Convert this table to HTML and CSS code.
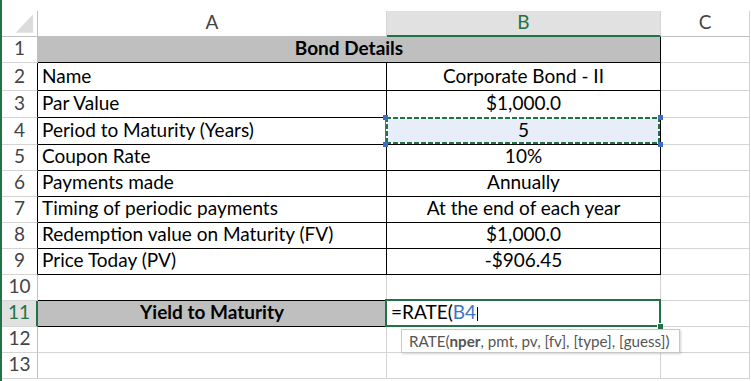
FILE: index.html
```html
<!DOCTYPE html>
<html lang="en">
<head>
<meta charset="utf-8">
<title>Bond Details – Yield to Maturity</title>
<link rel="stylesheet" href="styles.css">
</head>
<body>
<div class="sheet">
  <div class="grid">
    <div class="corner"><svg width="36" height="25" viewBox="0 0 36 25"><polygon points="14,22 32,22 32,3" fill="#dcdcdc"/></svg></div>
    <div class="colhdr">A</div>
    <div class="colhdr sel">B</div>
    <div class="colhdr">C</div>

    <div class="rowhdr">1</div>
    <div class="cell span2 shade bold center b">Bond Details</div>
    <div class="cell"></div>

    <div class="rowhdr edge">2</div>
    <div class="cell b">Name</div>
    <div class="cell b center">Corporate Bond - II</div>
    <div class="cell"></div>

    <div class="rowhdr edge">3</div>
    <div class="cell b">Par Value</div>
    <div class="cell b center">$1,000.0</div>
    <div class="cell"></div>

    <div class="rowhdr edge">4</div>
    <div class="cell b">Period to Maturity (Years)</div>
    <div class="cell b center ref">5<span class="h tl"></span><span class="h tr"></span><span class="h bl"></span><span class="h br"></span></div>
    <div class="cell"></div>

    <div class="rowhdr edge">5</div>
    <div class="cell b">Coupon Rate</div>
    <div class="cell b center">10%</div>
    <div class="cell"></div>

    <div class="rowhdr edge">6</div>
    <div class="cell b">Payments made</div>
    <div class="cell b center">Annually</div>
    <div class="cell"></div>

    <div class="rowhdr edge">7</div>
    <div class="cell b">Timing of periodic payments</div>
    <div class="cell b center">At the end of each year</div>
    <div class="cell"></div>

    <div class="rowhdr edge">8</div>
    <div class="cell b">Redemption value on Maturity (FV)</div>
    <div class="cell b center">$1,000.0</div>
    <div class="cell"></div>

    <div class="rowhdr edge">9</div>
    <div class="cell b">Price Today (PV)</div>
    <div class="cell b center">-$906.45</div>
    <div class="cell"></div>

    <div class="rowhdr">10</div>
    <div class="cell bb"></div>
    <div class="cell"></div>
    <div class="cell"></div>

    <div class="rowhdr active">11</div>
    <div class="cell shade bold center bb">Yield to Maturity</div>
    <div class="cell editing">=RATE(<span class="refText">B4</span><span class="caret"></span>
      <div class="tip">RATE(<b>nper</b>, pmt, pv, [fv], [type], [guess])</div>
    </div>
    <div class="cell"></div>

    <div class="rowhdr">12</div>
    <div class="cell"></div>
    <div class="cell"></div>
    <div class="cell"></div>

    <div class="rowhdr">13</div>
    <div class="cell"></div>
    <div class="cell"></div>
    <div class="cell"></div>
  </div>
</div>
</body>
</html>
```
FILE: styles.css
```css
html, body {
  margin: 0;
  padding: 0;
  background: #fff;
}
body {
  width: 751px;
  height: 381px;
  overflow: hidden;
  font-family: Lato, "Liberation Sans", sans-serif;
  font-size: 19px;
  color: #000;
}
.sheet {
  height: 381px;
  box-sizing: border-box;
  border-left: 2px solid #217346;
  padding-top: 11px;
}
.grid {
  display: grid;
  grid-template-columns: 36px 349px 274px 89px;
  grid-template-rows: 26px 26px 28px 27px 27px 26px 26px 26px 26px 26px 26px 26px 26px 26px;
}
.grid > div {
  box-sizing: border-box;
  border-right: 1px solid #d4d4d4;
  border-bottom: 1px solid #d4d4d4;
  display: flex;
  align-items: flex-end;
  line-height: 22px;
  padding: 0 4px 3px;
  white-space: nowrap;
  min-width: 0;
}
.grid > .corner {
  padding: 0;
  align-items: stretch;
  border-right-color: #c0c0c0;
  border-bottom-color: #c0c0c0;
}
.corner svg { display: block; }
.colhdr {
  justify-content: center;
  color: #444;
}
.grid > .colhdr {
  border-bottom-color: #c0c0c0;
}
.grid > .colhdr.sel {
  background: #e1e1e1;
  color: #217346;
  border-bottom: 2px solid #217346;
  padding-bottom: 2px;
}
.rowhdr {
  justify-content: center;
  color: #444;
}
.grid > .rowhdr {
  border-right-color: #c0c0c0;
  padding: 0 0 3px;
}
.grid > .rowhdr.edge {
  border-right-color: #000;
}
.grid > .rowhdr.active {
  background: #e1e1e1;
  color: #217346;
  border-right: 2px solid #217346;
}
.span2 { grid-column: span 2; }
.center { justify-content: center; }
.bold { font-weight: 700; }
.shade { background: #bfbfbf; }
.grid > .b {
  border-right-color: #000;
  border-bottom-color: #000;
}
.grid > .bb {
  border-bottom-color: #000;
}

/* referenced range B4 */
.grid > .ref {
  position: relative;
  background: #e7eef9;
}
.ref::before {
  content: "";
  position: absolute;
  left: -2px;
  top: -1px;
  right: 0;
  bottom: 0;
  border-left: 1px solid #3c6fc4;
}
.ref::after {
  content: "";
  position: absolute;
  left: -1px;
  top: -1px;
  right: 0;
  bottom: 0;
  background:
    repeating-linear-gradient(90deg, #217346 0 5px, #fff 5px 7px) top left / 100% 2px no-repeat,
    repeating-linear-gradient(90deg, #217346 0 5px, #fff 5px 7px) bottom left / 100% 2px no-repeat,
    repeating-linear-gradient(180deg, #217346 0 5px, #fff 5px 7px) top left / 2px 100% no-repeat,
    repeating-linear-gradient(180deg, #217346 0 5px, #fff 5px 7px) top right / 2px 100% no-repeat;
}
.h {
  position: absolute;
  width: 5px;
  height: 5px;
  background: #3c6fc4;
  z-index: 2;
}
.h.tl { left: -4px; top: -3px; }
.h.tr { right: -3px; top: -3px; }
.h.bl { left: -4px; bottom: -3px; }
.h.br { right: -3px; bottom: -3px; }

/* active cell B11 */
.grid > .editing {
  position: relative;
  overflow: visible;
}
.editing::after {
  content: "";
  position: absolute;
  left: -2px;
  top: -2px;
  right: -1px;
  bottom: -1px;
  border: 2px solid #217346;
  pointer-events: none;
}
.editing::before {
  content: "";
  position: absolute;
  right: -3px;
  bottom: -3px;
  width: 5px;
  height: 5px;
  background: #217346;
  border-left: 1px solid #fff;
  border-top: 1px solid #fff;
  z-index: 2;
}
.refText { color: #3e74c7; }
.caret {
  display: inline-block;
  width: 1px;
  height: 14px;
  background: #000;
  margin: 0 0 2px 1px;
  align-self: flex-end;
}
.tip {
  position: absolute;
  left: 14px;
  top: 28px;
  width: 279px;
  height: 24px;
  box-sizing: border-box;
  background: #fff;
  border: 1px solid #c8c8c8;
  box-shadow: 1px 1px 2px rgba(0, 0, 0, 0.18);
  color: #555;
  font-size: 15.2px;
  line-height: 22px;
  padding-left: 7px;
  z-index: 3;
}
.tip b { font-weight: 700; }
```
